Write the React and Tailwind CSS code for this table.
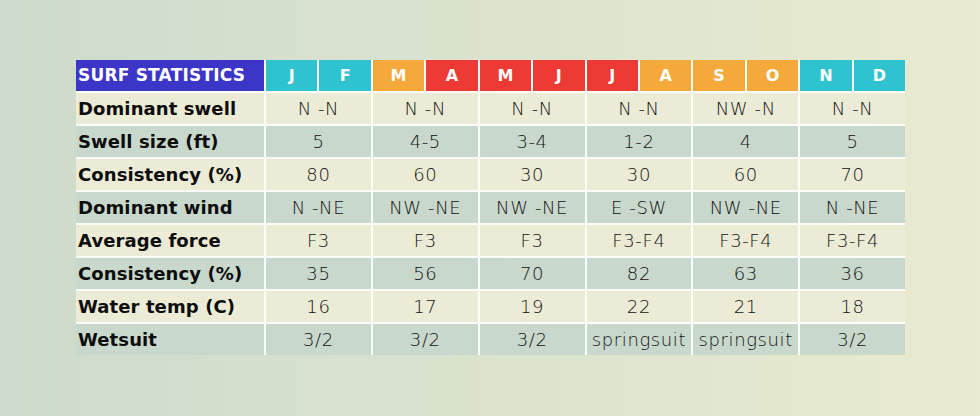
import React from "react";

const MONTHS = [
  { m: "J", c: "bg-[#2fc3cf]" },
  { m: "F", c: "bg-[#2fc3cf]" },
  { m: "M", c: "bg-[#f5a93b]" },
  { m: "A", c: "bg-[#ee3a35]" },
  { m: "M", c: "bg-[#ee3a35]" },
  { m: "J", c: "bg-[#ee3a35]" },
  { m: "J", c: "bg-[#ee3a35]" },
  { m: "A", c: "bg-[#f5a93b]" },
  { m: "S", c: "bg-[#f5a93b]" },
  { m: "O", c: "bg-[#f5a93b]" },
  { m: "N", c: "bg-[#2fc3cf]" },
  { m: "D", c: "bg-[#2fc3cf]" },
];

const ROWS = [
  ["Dominant swell", ["N -N", "N -N", "N -N", "N -N", "NW -N", "N -N"]],
  ["Swell size (ft)", ["5", "4-5", "3-4", "1-2", "4", "5"]],
  ["Consistency (%)", ["80", "60", "30", "30", "60", "70"]],
  ["Dominant wind", ["N -NE", "NW -NE", "NW -NE", "E -SW", "NW -NE", "N -NE"]],
  ["Average force", ["F3", "F3", "F3", "F3-F4", "F3-F4", "F3-F4"]],
  ["Consistency (%)", ["35", "56", "70", "82", "63", "36"]],
  ["Water temp (C)", ["16", "17", "19", "22", "21", "18"]],
  ["Wetsuit", ["3/2", "3/2", "3/2", "springsuit", "springsuit", "3/2"]],
];

export default function App() {
  return (
    <div
      className="w-[980px] h-[416px] bg-gradient-to-r from-[#cddbcc] to-[#e9ebd0] pt-[60px] pl-[76px]"
      style={{ fontFamily: '"DejaVu Sans", "Liberation Sans", sans-serif' }}
    >
      <div className="w-[829px] grid grid-cols-[188px_repeat(12,1fr)] gap-[2px] bg-white/90">
        {/* header */}
        <div className="h-[31px] bg-[#3b36c8] text-white font-bold text-[17px] flex items-center pl-[2px] tracking-[0.2px]">
          SURF STATISTICS
        </div>
        {MONTHS.map((x, i) => (
          <div
            key={i}
            className={`h-[31px] ${x.c} text-white font-bold text-[16px] flex items-center justify-center`}
          >
            {x.m}
          </div>
        ))}

        {/* body */}
        {ROWS.map(([label, vals], r) => {
          const bg = r % 2 === 0 ? "bg-[#ebebd6]" : "bg-[#c9d8cc]";
          return (
            <React.Fragment key={r}>
              <div
                className={`h-[31px] ${bg} text-[#0d0d0d] font-bold text-[18px] flex items-center pl-[2px] tracking-[0.1px]`}
              >
                {label}
              </div>
              {vals.map((v, i) => (
                <div
                  key={i}
                  className={`col-span-2 h-[31px] ${bg} text-[#111] text-[18px] font-extralight tracking-[0.6px] flex items-center justify-center`}
                >
                  {v}
                </div>
              ))}
            </React.Fragment>
          );
        })}
      </div>
    </div>
  );
}
